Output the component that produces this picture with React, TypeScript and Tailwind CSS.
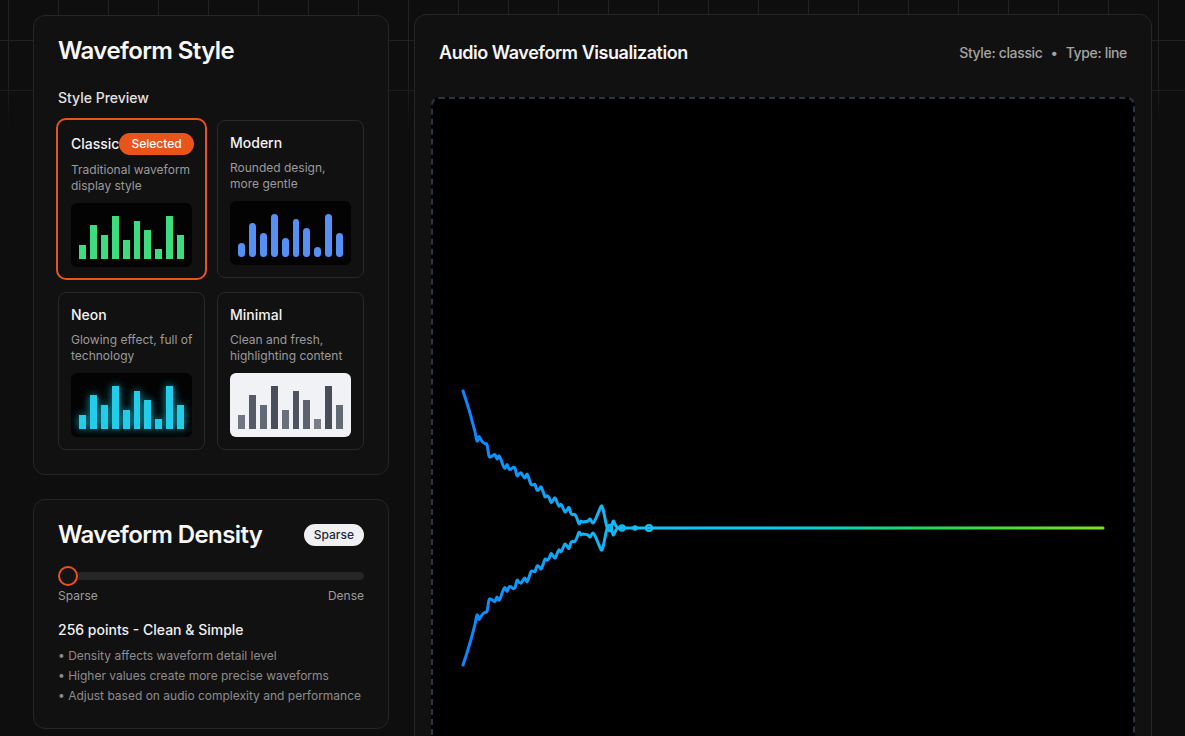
import React from 'react';

type StyleId = 'classic' | 'modern' | 'neon' | 'minimal';

type StyleOption = {
  id: StyleId;
  name: string;
  description: string;
};

const BARS = [30, 70, 50, 90, 40, 80, 60, 20, 90, 50];

const STYLES: StyleOption[] = [
  { id: 'classic', name: 'Classic', description: 'Traditional waveform display style' },
  { id: 'modern', name: 'Modern', description: 'Rounded design, more gentle' },
  { id: 'neon', name: 'Neon', description: 'Glowing effect, full of technology' },
  { id: 'minimal', name: 'Minimal', description: 'Clean and fresh, highlighting content' },
];

const NOTES = [
  'Density affects waveform detail level',
  'Higher values create more precise waveforms',
  'Adjust based on audio complexity and performance',
];

// page coordinates, the svg viewBox is laid over the canvas area
const MID = 527.5;

const AMP_KEYS: [number, number][] = [
  [463, 137], [466, 128], [470, 115], [474, 100], [477, 90], [480, 88], [485, 84],
  [489, 76], [492, 72], [497, 71], [502, 66], [507, 61], [515, 57], [522, 54],
  [530, 47], [540, 38], [548, 31], [557, 25], [567, 18], [575, 12], [581, 6], [585, 4],
];

const OSC: [number, number][] = [
  [588, 7], [590, 9], [593, 5], [596, 10], [599, 17], [602, 22], [604.5, 12],
  [607, 1], [610, -3], [612, 3], [613.5, 7], [616, 2], [618, 0], [621, 0],
];

function ampAt(x: number) {
  for (let i = 0; i < AMP_KEYS.length - 1; i++) {
    const [x0, a0] = AMP_KEYS[i];
    const [x1, a1] = AMP_KEYS[i + 1];
    if (x >= x0 && x <= x1) return a0 + ((x - x0) / (x1 - x0)) * (a1 - a0);
  }
  return 0;
}

function wavePoints(): [number, number][] {
  const pts: [number, number][] = [];
  for (let x = 463; x <= 584; x += 2) {
    const a = ampAt(x);
    const fade = Math.min(1, Math.max(0, (x - 473) / 6)) * Math.min(1, a / 10);
    const n = (2.6 * Math.sin(x * 0.92) + 1.6 * Math.sin(x * 0.43 + 1.2) + 1.1 * Math.sin(x * 1.55 + 0.4)) * fade;
    pts.push([x, a + n]);
  }
  return [...pts, ...OSC];
}

// smooth catmull-rom path through the points
function toPath(pts: [number, number][], sign: 1 | -1) {
  const p = pts.map(([x, a]) => [x, MID - sign * a] as [number, number]);
  let d = `M${p[0][0].toFixed(1)} ${p[0][1].toFixed(1)}`;
  for (let i = 0; i < p.length - 1; i++) {
    const p0 = p[i - 1] || p[i];
    const p1 = p[i];
    const p2 = p[i + 1];
    const p3 = p[i + 2] || p2;
    const c1x = p1[0] + (p2[0] - p0[0]) / 6;
    const c1y = p1[1] + (p2[1] - p0[1]) / 6;
    const c2x = p2[0] - (p3[0] - p1[0]) / 6;
    const c2y = p2[1] - (p3[1] - p1[1]) / 6;
    d += ` C${c1x.toFixed(1)} ${c1y.toFixed(1)} ${c2x.toFixed(1)} ${c2y.toFixed(1)} ${p2[0].toFixed(1)} ${p2[1].toFixed(1)}`;
  }
  return d;
}

function Waveform() {
  const pts = wavePoints();
  return (
    <svg viewBox="433 98.5 700 858" preserveAspectRatio="none" className="block h-full w-full">
      <defs>
        <linearGradient id="wave" gradientUnits="userSpaceOnUse" x1="463" y1="0" x2="1103" y2="0">
          <stop offset="0" stopColor="#0d84ff" />
          <stop offset="0.19" stopColor="#10b2f8" />
          <stop offset="0.3" stopColor="#12c6f5" />
          <stop offset="0.5" stopColor="#08cdf0" />
          <stop offset="0.6" stopColor="#08d6b4" />
          <stop offset="0.72" stopColor="#22d95a" />
          <stop offset="1" stopColor="#7ce21c" />
        </linearGradient>
      </defs>
      <g fill="none" stroke="url(#wave)" strokeWidth="3" strokeLinejoin="round" strokeLinecap="round">
        <path d={toPath(pts, 1)} />
        <path d={toPath(pts, -1)} />
        <path d={`M620 ${MID} L1103 ${MID}`} />
        <circle cx="622" cy={MID} r="2.6" strokeWidth="2.2" />
        <circle cx="635" cy={MID} r="1.6" strokeWidth="2.2" />
        <circle cx="649" cy={MID} r="3" strokeWidth="2.2" />
      </g>
    </svg>
  );
}

function Preview({ id }: { id: StyleId }) {
  if (id === 'minimal') {
    return (
      <div className="flex h-16 items-end gap-1 rounded-md bg-[#f1f2f5] px-2 pb-2">
        {BARS.map((h, i) => (
          <div key={i} className="flex-1 bg-[#3f4753]" style={{ height: `${h * 0.48}px`, opacity: 0.6 + (0.4 * h) / 100 }} />
        ))}
      </div>
    );
  }
  const bar =
    id === 'classic'
      ? 'bg-[#3cdc7f]'
      : id === 'modern'
        ? 'bg-[#5591f5] rounded-full'
        : 'bg-[#22cdea] shadow-[0_0_8px_rgba(34,211,238,0.75)]';
  return (
    <div className="flex h-16 items-end gap-1 rounded-md bg-[#030303] px-2 pb-2">
      {BARS.map((h, i) => (
        <div key={i} className={`flex-1 ${bar}`} style={{ height: `${h * 0.48}px` }} />
      ))}
    </div>
  );
}

function StyleCard({ option, selected }: { option: StyleOption; selected: boolean }) {
  return (
    <div
      className={
        selected
          ? '-m-[2px] rounded-[10px] border-2 border-[#e9541b] px-[13px] pt-[13px] pb-[11px]'
          : 'rounded-lg border border-[#2a2929] p-3'
      }
    >
      <div className="flex items-center justify-between">
        <span className="text-sm font-medium leading-5 text-[#f3f3f3]">{option.name}</span>
        {selected ? (
          <span className="whitespace-nowrap rounded-full bg-[#e9541b] px-3 py-[3px] text-xs font-medium leading-4 text-white">
            Selected
          </span>
        ) : null}
      </div>
      <p className="-mr-1 mt-[7px] text-xs leading-4 text-[#9a9a9a]">{option.description}</p>
      <div className="mt-[9px]">
        <Preview id={option.id} />
      </div>
    </div>
  );
}

export default function App() {
  return (
    <div className="relative min-h-screen overflow-hidden bg-[#0f0e0f] font-['Inter',sans-serif] text-white">
      <div className="pointer-events-none absolute inset-x-0 top-0 h-[130px] bg-[linear-gradient(to_right,#232223_1px,transparent_1px),linear-gradient(to_bottom,#232223_1px,transparent_1px)] bg-[size:50px_50px] bg-[position:8px_40px] [mask-image:linear-gradient(to_bottom,#000_60%,transparent)]" />

      <div className="relative flex items-start gap-[25px] px-[33px] pt-[14px] pb-10">
        <div className="mt-px flex w-[356px] shrink-0 flex-col gap-[24px]">
          <section className="rounded-xl border border-[#272627] bg-[#121112] px-6 pt-[19px] pb-6">
            <h2 className="text-2xl font-semibold leading-8 tracking-tight text-[#f7f7f7]">Waveform Style</h2>
            <h3 className="mt-[21px] text-sm font-medium leading-5 text-[#e2e2e2]">Style Preview</h3>
            <div className="mt-3 grid grid-cols-2 gap-x-3 gap-y-3.5">
              {STYLES.map((s) => (
                <StyleCard key={s.id} option={s} selected={s.id === 'classic'} />
              ))}
            </div>
          </section>

          <section className="rounded-xl border border-[#272627] bg-[#121112] px-6 pt-[19px] pb-6">
            <div className="flex items-center justify-between">
              <h2 className="text-2xl font-semibold leading-8 tracking-tight text-[#f7f7f7]">Waveform Density</h2>
              <span className="rounded-full bg-[#eef0f4] px-2.5 py-[3px] text-xs font-medium leading-4 text-[#1f2937]">
                Sparse
              </span>
            </div>
            <div className="relative mt-[15px] flex h-5 items-center">
              <div className="h-2 w-full rounded-full bg-[#262424]" />
              <div className="absolute left-0 top-0 size-5 rounded-full border-2 border-[#e9541b] bg-[#161314]" />
            </div>
            <div className="mt-0.5 flex justify-between text-xs leading-4 text-[#9c9c9c]">
              <span>Sparse</span>
              <span>Dense</span>
            </div>
            <p className="mt-4 text-sm font-medium leading-5 text-[#f0f0f0]">256 points - Clean &amp; Simple</p>
            <ul className="mt-2 space-y-1 text-xs leading-4 text-[#8c8c8c]">
              {NOTES.map((n) => (
                <li key={n}>• {n}</li>
              ))}
            </ul>
          </section>
        </div>

        <section className="flex-1 rounded-xl border border-[#272627] bg-[#121112] p-4">
          <div className="flex items-center justify-between px-2 pt-2 pb-[30px]">
            <h2 className="text-lg font-semibold leading-7 tracking-tight text-[#f5f5f5]">Audio Waveform Visualization</h2>
            <div className="flex items-center gap-2 text-sm font-medium tracking-tight text-[#a3a3a3]">
              <span>Style: classic</span>
              <span>•</span>
              <span>Type: line</span>
            </div>
          </div>
          <div className="h-[862px] overflow-hidden rounded-lg border-2 border-dashed border-[#2b3444] bg-black">
            <Waveform />
          </div>
        </section>
      </div>
    </div>
  );
}
